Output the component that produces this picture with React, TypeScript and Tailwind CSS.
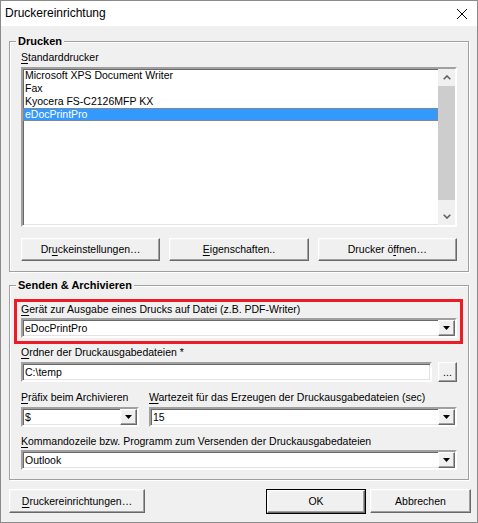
import type { ReactNode } from 'react'

const SUNKEN =
  'border-2 border-t-[#a0a0a0] border-l-[#a0a0a0] border-b-white border-r-white shadow-[inset_1px_1px_0_#696969,inset_-1px_-1px_0_#e3e3e3]'
const RAISED =
  'border border-t-white border-l-white border-b-[#696969] border-r-[#696969] shadow-[inset_-1px_-1px_0_#a0a0a0,inset_1px_1px_0_#f4f4f4]'

function U({ children }: { children: ReactNode }) {
  return <span className="underline decoration-1 underline-offset-[2px]">{children}</span>
}

function Arrow() {
  return (
    <svg width="7" height="4" viewBox="0 0 7 4" aria-hidden>
      <path d="M0 0h7L3.5 4z" fill="#000" />
    </svg>
  )
}

function Combo({ value, className = '' }: { value: string; className?: string }) {
  return (
    <div className={`flex h-[20px] bg-white ${SUNKEN} ${className}`}>
      <span className="flex-1 truncate pl-[2px] leading-[16px]">{value}</span>
      <span className={`flex w-[17px] items-center justify-center bg-[#f0f0f0] ${RAISED}`}>
        <Arrow />
      </span>
    </div>
  )
}

function Button({ children, className = '' }: { children: ReactNode; className?: string }) {
  return (
    <button type="button" className={`h-[23px] bg-[#f0f0f0] text-center ${RAISED} ${className}`}>
      {children}
    </button>
  )
}

function Group({ title, children, className = '' }: { title: string; children: ReactNode; className?: string }) {
  return (
    <fieldset
      className={`border border-[#a0a0a0] px-[11px] shadow-[1px_1px_0_white,inset_1px_1px_0_white] ${className}`}
    >
      <legend className="ml-[-5px] bg-[#f0f0f0] px-[2px] text-[11px] font-bold leading-[13px]">{title}</legend>
      {children}
    </fieldset>
  )
}

function Chevron({ up }: { up?: boolean }) {
  return (
    <svg width="8" height="5" viewBox="0 0 8 5" aria-hidden className={up ? '' : 'rotate-180'}>
      <path d="M0.7 4.3L4 1L7.3 4.3" fill="none" stroke="#606060" strokeWidth="1.6" />
    </svg>
  )
}

const PRINTERS = ['Microsoft XPS Document Writer', 'Fax', 'Kyocera FS-C2126MFP KX', 'eDocPrintPro']

export default function App() {
  return (
    <div className="flex h-[523px] w-[478px] flex-col border border-[#8a8a8a] bg-[#f0f0f0] font-['Liberation_Sans',Arial,sans-serif] text-[10.5px] leading-[13px] text-black">
      <div className="flex h-[25px] items-center justify-between bg-white pl-[4px] pr-[10px]">
        <span className="text-[12px]">Druckereinrichtung</span>
        <svg width="10" height="10" viewBox="0 0 10 10" aria-hidden>
          <path d="M0 0L10 10M10 0L0 10" stroke="#000" strokeWidth="1" />
        </svg>
      </div>

      <div className="flex-1 px-[8px] pt-[9px]">
        <Group title="Drucken" className="pb-[10px]">
          <div className="pt-[3px]">
            <U>S</U>tandarddrucker
          </div>
          <div className={`mt-[3px] flex h-[160px] bg-white ${SUNKEN}`}>
            <ul className="flex-1">
              {PRINTERS.map((p) => (
                <li
                  key={p}
                  className={
                    p === 'eDocPrintPro'
                      ? 'border border-dotted border-[#c9782f] bg-[#3399ff] pl-[1px] leading-[11px] text-white'
                      : 'pl-[2px]'
                  }
                >
                  {p}
                </li>
              ))}
            </ul>
            <div className="flex w-[17px] flex-col bg-[#f0f0f0]">
              <div className="flex h-[17px] items-center justify-center">
                <Chevron up />
              </div>
              <div className="flex-1">
                <div className="h-[114px] bg-[#cdcdcd]" />
              </div>
              <div className="flex h-[17px] items-center justify-center">
                <Chevron />
              </div>
            </div>
          </div>
          <div className="mt-[11px] grid grid-cols-3 gap-x-[9px]">
            <Button>
              Dr<U>u</U>ckeinstellungen…
            </Button>
            <Button>
              <U>E</U>igenschaften..
            </Button>
            <Button>
              Drucker ö<U>f</U>fnen…
            </Button>
          </div>
        </Group>

        <Group title="Senden & Archivieren" className="mt-[7px] pb-[9px]">
          <div className="mt-[7px] ml-[-7px] mr-[-6px] border-[3px] border-[#ed1c24] pl-[4px] pr-[3px] pt-[1px] pb-[3px]">
            <div>
              <U>G</U>erät zur Ausgabe eines Drucks auf Datei (z.B. PDF-Writer)
            </div>
            <Combo value="eDocPrintPro" className="mt-[2px]" />
          </div>

          <div className="mt-[2px]">
            <U>O</U>rdner der Druckausgabedateien *
          </div>
          <div className="mt-[3px] flex gap-[6px]">
            <div className={`h-[20px] flex-1 bg-white pl-[2px] leading-[16px] ${SUNKEN}`}>C:\temp</div>
            <button type="button" className={`h-[20px] w-[19px] bg-[#f0f0f0] leading-[14px] ${RAISED}`}>
              ...
            </button>
          </div>

          <div className="mt-[9px] grid grid-cols-[118px_1fr] gap-x-[10px]">
            <div>
              <U>P</U>räfix beim Archivieren
            </div>
            <div className="whitespace-nowrap">
              <U>W</U>artezeit für das Erzeugen der Druckausgabedateien (sec)
            </div>
            <Combo value="$" className="mt-[3px]" />
            <Combo value="15" className="mt-[3px]" />
          </div>

          <div className="mt-[8px]">
            <U>K</U>ommandozeile bzw. Programm zum Versenden der Druckausgabedateien
          </div>
          <Combo value="Outlook" className="mt-[2px]" />
        </Group>

        <div className="mt-[9px] mr-[-2px] flex justify-between">
          <Button className="h-[24px] w-[136px]">
            <U>D</U>ruckereinrichtungen…
          </Button>
          <div className="flex gap-[4px]">
            <div className="border border-black">
              <Button className="h-[22px] w-[98px]">OK</Button>
            </div>
            <Button className="h-[24px] w-[101px]">Abbrechen</Button>
          </div>
        </div>
      </div>
    </div>
  )
}
